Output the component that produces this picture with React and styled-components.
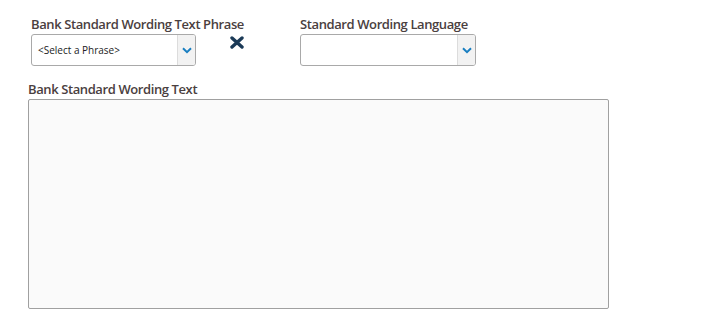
import React from 'react';
import styled, { createGlobalStyle } from 'styled-components';

const GlobalStyle = createGlobalStyle`
  body {
    margin: 0;
    background: #fff;
    font-family: 'Open Sans', 'Noto Sans', sans-serif;
  }
`;

const Page = styled.div`
  width: 705px;
  height: 320px;
  padding: 15px 0 0 28px;
  box-sizing: border-box;
`;

const TopRow = styled.div`
  display: flex;
  align-items: flex-start;
`;

const Field = styled.div`
  display: flex;
  flex-direction: column;
  width: ${p => p.width}px;
  margin-left: ${p => p.offset || 0}px;
`;

const Label = styled.label`
  font-size: 13px;
  font-weight: 600;
  color: #4a4040;
  line-height: 18px;
  height: 19px;
  letter-spacing: -0.4px;
  white-space: nowrap;
`;

const Select = styled.div`
  display: flex;
  height: 32px;
  box-sizing: border-box;
  border: 1px solid #a9a9a9;
  border-radius: 3px;
  background: #fff;
  overflow: hidden;
`;

const SelectText = styled.span`
  flex: 1;
  display: flex;
  align-items: center;
  padding-left: 6px;
  font-size: 10px;
  color: #222;
`;

const Arrow = styled.span`
  width: 17px;
  display: flex;
  align-items: center;
  justify-content: center;
  border-left: 1px solid #dcdcdc;
  background: #f2f2f2;
`;

const ClearButton = styled.button`
  border: 0;
  background: none;
  padding: 0;
  margin: 21px 0 0 34px;
  width: 14px;
  height: 13px;
  cursor: pointer;
  display: flex;
`;

const TextField = styled.div`
  display: flex;
  flex-direction: column;
  margin-top: 14px;
`;

const TextArea = styled.textarea`
  width: 581px;
  height: 210px;
  box-sizing: border-box;
  margin: 0;
  border: 1px solid #a0a0a0;
  border-radius: 2px;
  background: #fafafa;
  resize: none;
  font-family: inherit;
`;

const Chevron = () => (
  <svg width="10" height="7" viewBox="0 0 10 7">
    <path d="M1 1.2 L5 5.2 L9 1.2" fill="none" stroke="#1a7fc1" strokeWidth="2" />
  </svg>
);

const Cross = () => (
  <svg width="14" height="13" viewBox="0 0 14 13">
    <path d="M2 2 L12 11 M12 2 L2 11" stroke="#1b3a57" strokeWidth="3.4" strokeLinecap="round" />
  </svg>
);

export default function App() {
  return (
    <Page>
      <GlobalStyle />
      <TopRow>
        <Field offset={3} width={165}>
          <Label>Bank Standard Wording Text Phrase</Label>
          <Select>
            <SelectText>&lt;Select a Phrase&gt;</SelectText>
            <Arrow><Chevron /></Arrow>
          </Select>
        </Field>
        <ClearButton aria-label="clear"><Cross /></ClearButton>
        <Field offset={56} width={176}>
          <Label>Standard Wording Language</Label>
          <Select>
            <SelectText />
            <Arrow><Chevron /></Arrow>
          </Select>
        </Field>
      </TopRow>
      <TextField>
        <Label>Bank Standard Wording Text</Label>
        <TextArea />
      </TextField>
    </Page>
  );
}
